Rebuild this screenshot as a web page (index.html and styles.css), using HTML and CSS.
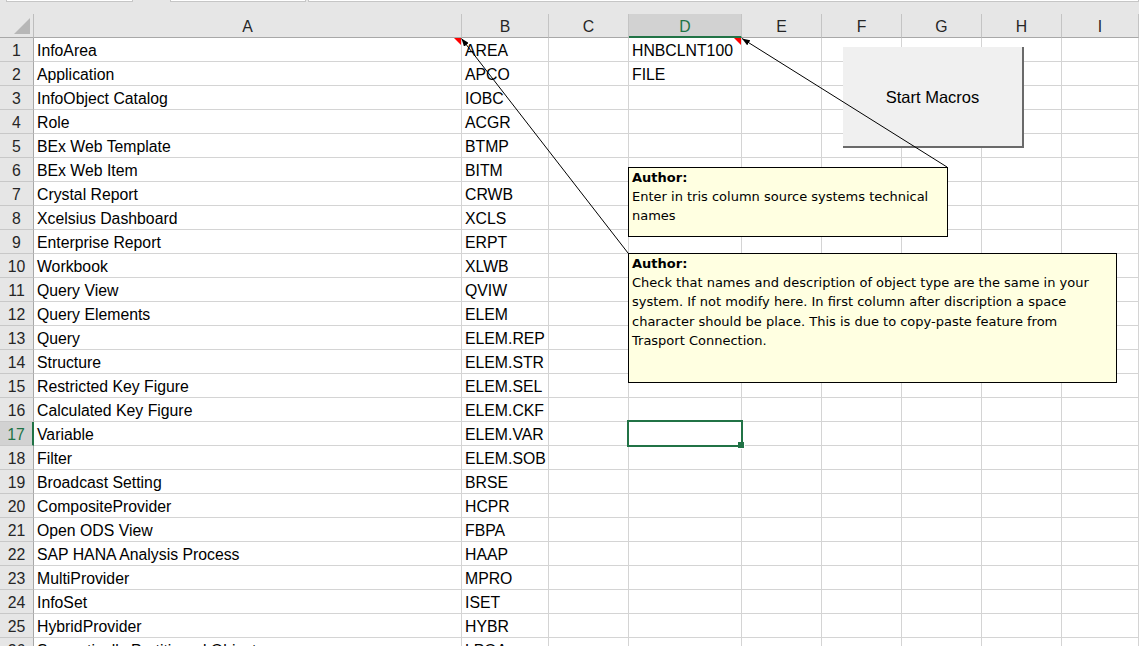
FILE: index.html
```html
<!DOCTYPE html>
<html>
<head>
<meta charset="utf-8">
<link rel="stylesheet" href="styles.css">
</head>
<body>
<div class="app">
  <div class="topstrip">
    <div class="tbox tbox-name"></div>
    <div class="tbox tbox-fx"></div>
    <div class="tbox tbox-formula"></div>
  </div>
  <div class="sheet">
    <div class="row hdr">
      <div class="corner"><span class="tri"></span></div>
      <div class="ch">A</div><div class="ch">B</div><div class="ch">C</div><div class="ch ch-sel">D</div><div class="ch">E</div><div class="ch">F</div><div class="ch">G</div><div class="ch">H</div><div class="ch">I</div>
    </div>
    <div class="row"><div class="rh">1</div><div class="c">InfoArea</div><div class="c">AREA</div><div class="c"></div><div class="c">HNBCLNT100</div><div class="c"></div><div class="c"></div><div class="c"></div><div class="c"></div><div class="c"></div></div>
    <div class="row"><div class="rh">2</div><div class="c">Application</div><div class="c">APCO</div><div class="c"></div><div class="c">FILE</div><div class="c"></div><div class="c"></div><div class="c"></div><div class="c"></div><div class="c"></div></div>
    <div class="row"><div class="rh">3</div><div class="c">InfoObject Catalog</div><div class="c">IOBC</div><div class="c"></div><div class="c"></div><div class="c"></div><div class="c"></div><div class="c"></div><div class="c"></div><div class="c"></div></div>
    <div class="row"><div class="rh">4</div><div class="c">Role</div><div class="c">ACGR</div><div class="c"></div><div class="c"></div><div class="c"></div><div class="c"></div><div class="c"></div><div class="c"></div><div class="c"></div></div>
    <div class="row"><div class="rh">5</div><div class="c">BEx Web Template</div><div class="c">BTMP</div><div class="c"></div><div class="c"></div><div class="c"></div><div class="c"></div><div class="c"></div><div class="c"></div><div class="c"></div></div>
    <div class="row"><div class="rh">6</div><div class="c">BEx Web Item</div><div class="c">BITM</div><div class="c"></div><div class="c"></div><div class="c"></div><div class="c"></div><div class="c"></div><div class="c"></div><div class="c"></div></div>
    <div class="row"><div class="rh">7</div><div class="c">Crystal Report</div><div class="c">CRWB</div><div class="c"></div><div class="c"></div><div class="c"></div><div class="c"></div><div class="c"></div><div class="c"></div><div class="c"></div></div>
    <div class="row"><div class="rh">8</div><div class="c">Xcelsius Dashboard</div><div class="c">XCLS</div><div class="c"></div><div class="c"></div><div class="c"></div><div class="c"></div><div class="c"></div><div class="c"></div><div class="c"></div></div>
    <div class="row"><div class="rh">9</div><div class="c">Enterprise Report</div><div class="c">ERPT</div><div class="c"></div><div class="c"></div><div class="c"></div><div class="c"></div><div class="c"></div><div class="c"></div><div class="c"></div></div>
    <div class="row"><div class="rh">10</div><div class="c">Workbook</div><div class="c">XLWB</div><div class="c"></div><div class="c"></div><div class="c"></div><div class="c"></div><div class="c"></div><div class="c"></div><div class="c"></div></div>
    <div class="row"><div class="rh">11</div><div class="c">Query View</div><div class="c">QVIW</div><div class="c"></div><div class="c"></div><div class="c"></div><div class="c"></div><div class="c"></div><div class="c"></div><div class="c"></div></div>
    <div class="row"><div class="rh">12</div><div class="c">Query Elements</div><div class="c">ELEM</div><div class="c"></div><div class="c"></div><div class="c"></div><div class="c"></div><div class="c"></div><div class="c"></div><div class="c"></div></div>
    <div class="row"><div class="rh">13</div><div class="c">Query</div><div class="c">ELEM.REP</div><div class="c"></div><div class="c"></div><div class="c"></div><div class="c"></div><div class="c"></div><div class="c"></div><div class="c"></div></div>
    <div class="row"><div class="rh">14</div><div class="c">Structure</div><div class="c">ELEM.STR</div><div class="c"></div><div class="c"></div><div class="c"></div><div class="c"></div><div class="c"></div><div class="c"></div><div class="c"></div></div>
    <div class="row"><div class="rh">15</div><div class="c">Restricted Key Figure</div><div class="c">ELEM.SEL</div><div class="c"></div><div class="c"></div><div class="c"></div><div class="c"></div><div class="c"></div><div class="c"></div><div class="c"></div></div>
    <div class="row"><div class="rh">16</div><div class="c">Calculated Key Figure</div><div class="c">ELEM.CKF</div><div class="c"></div><div class="c"></div><div class="c"></div><div class="c"></div><div class="c"></div><div class="c"></div><div class="c"></div></div>
    <div class="row"><div class="rh rh-sel">17</div><div class="c">Variable</div><div class="c">ELEM.VAR</div><div class="c"></div><div class="c"></div><div class="c"></div><div class="c"></div><div class="c"></div><div class="c"></div><div class="c"></div></div>
    <div class="row"><div class="rh">18</div><div class="c">Filter</div><div class="c">ELEM.SOB</div><div class="c"></div><div class="c"></div><div class="c"></div><div class="c"></div><div class="c"></div><div class="c"></div><div class="c"></div></div>
    <div class="row"><div class="rh">19</div><div class="c">Broadcast Setting</div><div class="c">BRSE</div><div class="c"></div><div class="c"></div><div class="c"></div><div class="c"></div><div class="c"></div><div class="c"></div><div class="c"></div></div>
    <div class="row"><div class="rh">20</div><div class="c">CompositeProvider</div><div class="c">HCPR</div><div class="c"></div><div class="c"></div><div class="c"></div><div class="c"></div><div class="c"></div><div class="c"></div><div class="c"></div></div>
    <div class="row"><div class="rh">21</div><div class="c">Open ODS View</div><div class="c">FBPA</div><div class="c"></div><div class="c"></div><div class="c"></div><div class="c"></div><div class="c"></div><div class="c"></div><div class="c"></div></div>
    <div class="row"><div class="rh">22</div><div class="c">SAP HANA Analysis Process</div><div class="c">HAAP</div><div class="c"></div><div class="c"></div><div class="c"></div><div class="c"></div><div class="c"></div><div class="c"></div><div class="c"></div></div>
    <div class="row"><div class="rh">23</div><div class="c">MultiProvider</div><div class="c">MPRO</div><div class="c"></div><div class="c"></div><div class="c"></div><div class="c"></div><div class="c"></div><div class="c"></div><div class="c"></div></div>
    <div class="row"><div class="rh">24</div><div class="c">InfoSet</div><div class="c">ISET</div><div class="c"></div><div class="c"></div><div class="c"></div><div class="c"></div><div class="c"></div><div class="c"></div><div class="c"></div></div>
    <div class="row"><div class="rh">25</div><div class="c">HybridProvider</div><div class="c">HYBR</div><div class="c"></div><div class="c"></div><div class="c"></div><div class="c"></div><div class="c"></div><div class="c"></div><div class="c"></div></div>
    <div class="row"><div class="rh">26</div><div class="c">Semantically Partitioned Object</div><div class="c">LPOA</div><div class="c"></div><div class="c"></div><div class="c"></div><div class="c"></div><div class="c"></div><div class="c"></div><div class="c"></div></div>
  </div>

  <div class="button">Start Macros</div>

  <svg class="links" width="1139" height="646" viewBox="0 0 1139 646">
    <defs>
      <marker id="ah" markerWidth="8" markerHeight="6" refX="8" refY="3" orient="auto" markerUnits="userSpaceOnUse">
        <path d="M0,0 L8,3 L0,6 z" fill="#000"/>
      </marker>
    </defs>
    <polygon points="454,38 461,38 461,45" fill="#ff0000"/>
    <polygon points="734,38 741,38 741,45" fill="#ff0000"/>
    <line x1="947" y1="167" x2="742" y2="38.5" stroke="#000" stroke-width="1" marker-end="url(#ah)"/>
    <line x1="628" y1="253" x2="461.5" y2="38.5" stroke="#000" stroke-width="1" marker-end="url(#ah)"/>
  </svg>

  <div class="selection"><span class="handle"></span></div>

  <div class="comment comment-1">
    <div class="author">Author:</div>
    <div class="body">Enter in tris column source systems technical<br>names</div>
  </div>
  <div class="comment comment-2">
    <div class="author">Author:</div>
    <div class="body">Check that names and description of object type are the same in your<br>system. If not modify here. In first column after discription a space<br>character should be place. This is due to copy-paste feature from<br>Trasport Connection.</div>
  </div>
</div>
</body>
</html>
```

FILE: styles.css
```css
html, body {
  margin: 0;
  padding: 0;
  background: #ffffff;
}

.app {
  position: relative;
  width: 1139px;
  height: 646px;
  overflow: hidden;
  font-family: "Liberation Sans", Arial, sans-serif;
  color: #000;
}

.topstrip {
  height: 14px;
  background: #e6e6e6;
  display: flex;
  align-items: flex-start;
}

.tbox {
  height: 1px;
  background: #ffffff;
  border: 1px solid #c6c6c6;
  border-top: none;
}

.tbox-name { margin-left: 6px; width: 125px; }
.tbox-fx { margin-left: 37px; width: 134px; }
.tbox-formula { margin-left: 2px; flex: 1; }

.sheet {
  display: flex;
  flex-direction: column;
}

.row {
  display: grid;
  grid-template-columns: 34px 428px 87px 80px 113px 80px 80px 80px 80px 1fr;
  height: 24px;
}

.c, .rh, .ch, .corner {
  box-sizing: border-box;
  height: 24px;
  font-size: 15.8px;
  line-height: 23px;
  padding-top: 1px;
  white-space: nowrap;
}

.c {
  border-right: 1px solid #d4d4d4;
  border-bottom: 1px solid #d4d4d4;
  padding-left: 3px;
  overflow: visible;
}

.rh {
  background: #e6e6e6;
  border-right: 1px solid #a8a8a8;
  border-bottom: 1px solid #c8c8c8;
  text-align: center;
  color: #262626;
}

.rh-sel {
  background: #d2d2d2;
  color: #217346;
  border-right: 2px solid #217346;
}

.hdr {
  background: #e6e6e6;
}

.corner {
  position: relative;
  border-right: 1px solid #bdbdbd;
  border-bottom: 1px solid #a8a8a8;
}

.tri {
  position: absolute;
  left: 14px;
  top: 4px;
  width: 0;
  height: 0;
  border-left: 16px solid transparent;
  border-bottom: 16px solid #b7b7b7;
}

.ch {
  text-align: center;
  border-right: 1px solid #c4c4c4;
  border-bottom: 1px solid #a8a8a8;
  color: #262626;
}

.ch-sel {
  background: #d2d2d2;
  color: #217346;
  border-bottom: 2px solid #217346;
}

.button {
  position: absolute;
  left: 843px;
  top: 47px;
  width: 181px;
  height: 101px;
  box-sizing: border-box;
  background: #f0f0f0;
  border-right: 2px solid #6a6a6a;
  border-bottom: 2px solid #6a6a6a;
  display: flex;
  align-items: center;
  justify-content: center;
  padding-top: 2px;
  font-size: 16.5px;
  color: #000;
}

.links {
  position: absolute;
  left: 0;
  top: 0;
  pointer-events: none;
}

.selection {
  position: absolute;
  left: 627px;
  top: 420px;
  width: 116px;
  height: 27px;
  box-sizing: border-box;
  border: 2px solid #217346;
}

.handle {
  position: absolute;
  right: -4px;
  bottom: -4px;
  width: 6px;
  height: 6px;
  background: #217346;
  border: 1px solid #ffffff;
  border-top: none;
  border-left: none;
}

.comment {
  position: absolute;
  box-sizing: border-box;
  background: #ffffe1;
  border: 1px solid #000;
  padding: 0 4px 0 3px;
  font-family: "DejaVu Sans", Verdana, sans-serif;
  font-size: 13px;
  line-height: 19.2px;
  color: #000;
  white-space: nowrap;
}

.comment .author {
  font-weight: bold;
}

.comment-1 {
  left: 628px;
  top: 167px;
  width: 320px;
  height: 70px;
}

.comment-2 {
  left: 628px;
  top: 253px;
  width: 489px;
  height: 130px;
}
```
